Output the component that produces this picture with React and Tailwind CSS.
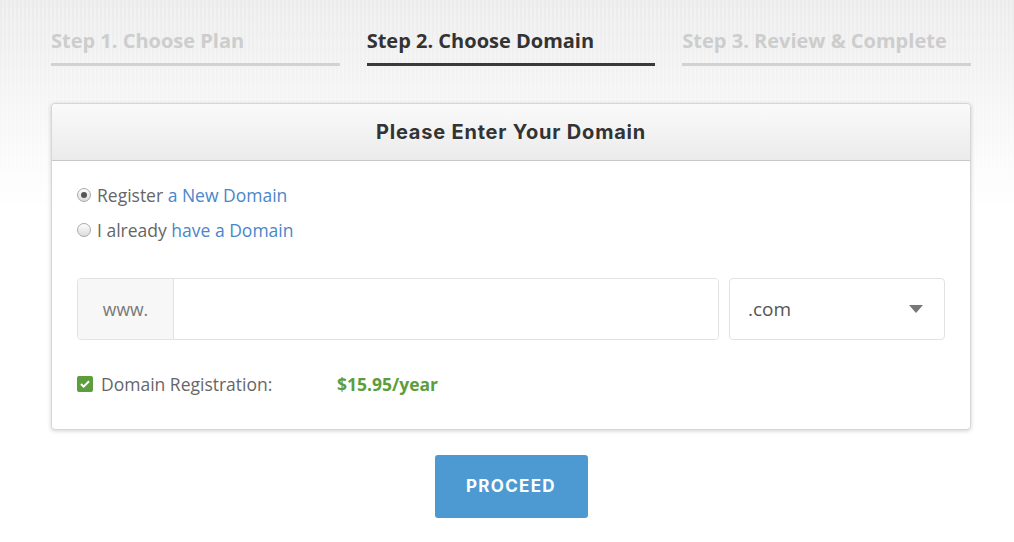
import React, { useState } from "react";

const steps = [
  { label: "Step 1. Choose Plan", active: false },
  { label: "Step 2. Choose Domain", active: true },
  { label: "Step 3. Review & Complete", active: false },
];

const Radio = ({ checked }) => (
  <span className="relative inline-block w-[14px] h-[14px] rounded-full border border-[#a9a9a9] bg-[linear-gradient(#fdfdfd,#dcdcdc)] shrink-0">
    {checked && (
      <span className="absolute left-[3px] top-[3px] w-[6px] h-[6px] rounded-full bg-[#555]" />
    )}
  </span>
);

const App = () => {
  const [mode, setMode] = useState("new");
  const [domain, setDomain] = useState("");

  return (
    <div className="min-h-[542px] bg-white bg-[linear-gradient(rgba(255,255,255,0),#ffffff_210px),repeating-linear-gradient(90deg,rgba(0,0,0,0.02)_0px,rgba(0,0,0,0.02)_2px,transparent_2px,transparent_4px),linear-gradient(#f0f0f0,#f6f6f6)] font-['Open_Sans',sans-serif]">
      <div className="w-[920px] ml-[51px] pt-[28px]">
        <div className="grid grid-cols-3 gap-[27px]">
          {steps.map((s) => (
            <div key={s.label}>
              <div
                className={`text-[20px] leading-[26px] font-bold ${
                  s.active ? "text-[#333]" : "text-[#cdcdcd]"
                }`}
              >
                {s.label}
              </div>
              <div
                className={`mt-[9px] h-[3px] ${
                  s.active ? "bg-[#3a3a3a]" : "bg-[#d2d2d2]"
                }`}
              />
            </div>
          ))}
        </div>

        <div className="mt-[37px] bg-white border border-[#d6d6d6] rounded-[4px] shadow-[0_1px_4px_rgba(0,0,0,0.18)]">
          <div className="h-[57px] flex items-center justify-center rounded-t-[4px] border-b border-[#c8c8c8] bg-[linear-gradient(#fafafa,#ebebeb)]">
            <h2 className="text-[20px] font-bold text-[#333] font-['Inter',sans-serif] tracking-[0.8px]">
              Please Enter Your Domain
            </h2>
          </div>

          <div className="px-[25px] pt-[22px] pb-[33px]">
            <div className="flex flex-col gap-[11px] text-[17.5px] leading-[24px]">
              <label className="flex items-center gap-[6px] cursor-pointer" onClick={() => setMode("new")}>
                <Radio checked={mode === "new"} />
                <span className="text-[#666]">
                  Register <span className="text-[#4a86c8]">a New Domain</span>
                </span>
              </label>
              <label className="flex items-center gap-[6px] cursor-pointer" onClick={() => setMode("have")}>
                <Radio checked={mode === "have"} />
                <span className="text-[#666]">
                  I already <span className="text-[#4a86c8]">have a Domain</span>
                </span>
              </label>
            </div>

            <div className="mt-[36px] flex gap-[10px]">
              <div className="flex flex-1 h-[62px] border border-[#e2e2e2] rounded-[4px] overflow-hidden">
                <div className="w-[96px] flex items-center justify-center bg-[#f7f7f7] border-r border-[#e2e2e2] text-[17.5px] text-[#777]">
                  www.
                </div>
                <input
                  value={domain}
                  onChange={(e) => setDomain(e.target.value)}
                  className="flex-1 px-4 text-[17px] text-[#555] outline-none bg-white"
                />
              </div>
              <div className="w-[216px] h-[62px] border border-[#e2e2e2] rounded-[4px] flex items-center justify-between pl-[18px] pr-[21px] bg-white">
                <span className="text-[19px] text-[#555]">.com</span>
                <svg width="14" height="8" viewBox="0 0 14 8">
                  <path d="M0 0h14L7 8z" fill="#777" />
                </svg>
              </div>
            </div>

            <div className="mt-[32px] flex items-center text-[17.5px] leading-[24px]">
              <span className="w-[16px] h-[16px] rounded-[2px] bg-[#5c9e3c] flex items-center justify-center">
                <svg width="10" height="8" viewBox="0 0 10 8">
                  <path d="M1 4l2.6 2.6L9 1.2" stroke="#fff" strokeWidth="2" fill="none" />
                </svg>
              </span>
              <span className="ml-[8px] w-[236px] text-[#666]">Domain Registration:</span>
              <span className="font-bold text-[#5c9e3c]">$15.95/year</span>
            </div>
          </div>
        </div>

        <div className="flex justify-center mt-[25px]">
          <button className="w-[153px] h-[63px] rounded-[3px] bg-[#4d9ad2] text-white text-[17px] font-bold uppercase font-['Inter',sans-serif] tracking-[1.3px]">
            Proceed
          </button>
        </div>
      </div>
    </div>
  );
};

export default App;
